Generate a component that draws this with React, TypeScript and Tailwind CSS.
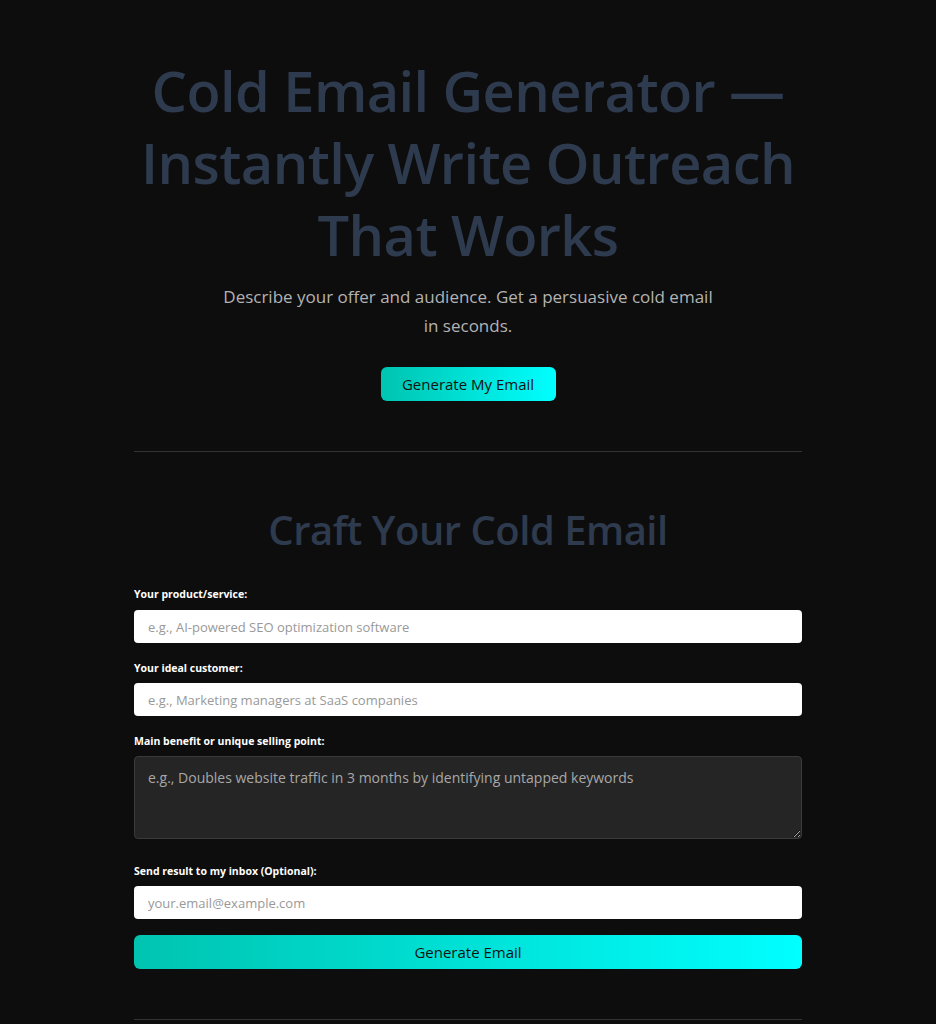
import React from "react";

export default function App() {
  const font = { fontFamily: '"Open Sans", "Noto Sans", sans-serif' };
  return (
    <div className="min-h-screen bg-[#0d0d0d] text-white" style={font}>
      <div className="mx-auto w-[668px] pt-[54px]">
        <h1 className="text-center text-[56px] leading-[72px] font-semibold text-[#2e3a4e] tracking-[-0.6px]">
          Cold Email Generator — Instantly Write Outreach That Works
        </h1>
        <p className="mx-auto mt-[12px] max-w-[500px] text-center text-[17px] leading-[29px] text-[#b3b3b3]">
          Describe your offer and audience. Get a persuasive cold email in seconds.
        </p>
        <div className="mt-[27px] flex justify-center">
          <button className="h-[34px] w-[175px] rounded-[6px] bg-gradient-to-r from-[#00c4b0] to-[#00ffff] text-[15px] text-[#111]">
            Generate My Email
          </button>
        </div>
        <div className="mt-[50px] h-px bg-[#333]" />
        <h2 className="mt-[54px] text-center text-[40px] leading-[48px] font-semibold text-[#2e3a4e] tracking-[-0.5px]">
          Craft Your Cold Email
        </h2>
        <div className="mt-[32px] flex flex-col">
          <label className="text-[10.5px] leading-[16px] font-bold text-white">Your product/service:</label>
          <input
            className="mt-[8px] h-[33px] rounded-[4px] bg-white px-[14px] text-[13px] text-black placeholder:text-[#999] outline-none"
            placeholder="e.g., AI-powered SEO optimization software"
          />
          <label className="mt-[17px] text-[10.5px] leading-[16px] font-bold text-white">Your ideal customer:</label>
          <input
            className="mt-[7px] h-[33px] rounded-[4px] bg-white px-[14px] text-[13px] text-black placeholder:text-[#999] outline-none"
            placeholder="e.g., Marketing managers at SaaS companies"
          />
          <label className="mt-[17px] text-[10.5px] leading-[16px] font-bold text-white">Main benefit or unique selling point:</label>
          <textarea
            className="mt-[7px] h-[83px] rounded-[4px] border border-[#3a3a3a] bg-[#252525] px-[13px] py-[10px] text-[14px] text-white placeholder:text-[#a8a8a8] outline-none"
            placeholder="e.g., Doubles website traffic in 3 months by identifying untapped keywords"
          />
          <label className="mt-[24px] text-[10.5px] leading-[16px] font-bold text-white">Send result to my inbox (Optional):</label>
          <input
            className="mt-[7px] h-[33px] rounded-[4px] bg-white px-[14px] text-[13px] text-black placeholder:text-[#999] outline-none"
            placeholder="your.email@example.com"
          />
          <button className="mt-[16px] h-[34px] rounded-[6px] bg-gradient-to-r from-[#00c4b0] to-[#00ffff] text-[15px] text-[#111]">
            Generate Email
          </button>
        </div>
        <div className="mt-[50px] h-px bg-[#333]" />
        <div className="h-[40px]" />
      </div>
    </div>
  );
}
